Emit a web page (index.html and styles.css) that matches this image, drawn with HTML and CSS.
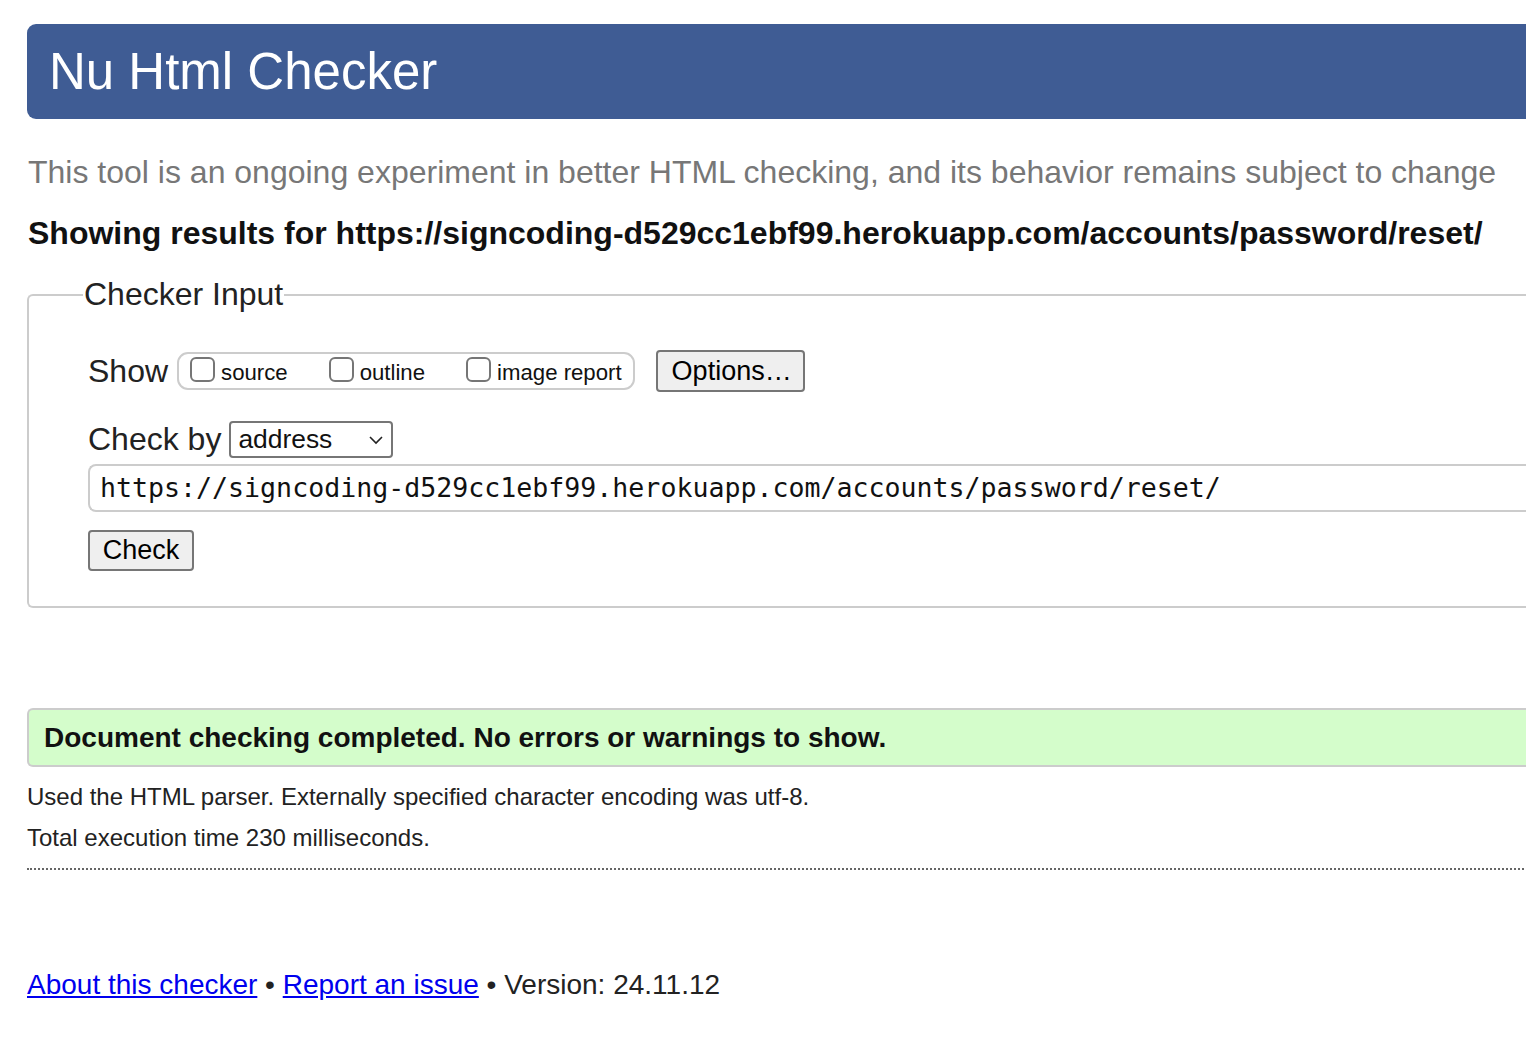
FILE: index.html
```html
<!DOCTYPE html>
<html lang="en">
<head>
<meta charset="utf-8">
<title>Nu Html Checker</title>
<link rel="stylesheet" href="styles.css">
</head>
<body>
<div class="page">
  <h1 class="banner">Nu Html Checker</h1>
  <p class="tagline">This tool is an ongoing experiment in better HTML checking, and its behavior remains subject to change</p>
  <p class="showing">Showing results for https://signcoding-d529cc1ebf99.herokuapp.com/accounts/password/reset/</p>
  <fieldset class="input-box">
    <legend class="legend">Checker Input</legend>
    <div class="row show-row">
      <span class="label">Show</span>
      <span class="pill">
        <label class="opt"><span class="cb"></span>source</label>
        <label class="opt"><span class="cb"></span>outline</label>
        <label class="opt"><span class="cb"></span>image report</label>
      </span>
      <span class="btn options">Options…</span>
    </div>
    <div class="row checkby-row">
      <span class="label">Check by</span>
      <span class="select">address
        <svg class="chev" width="16" height="10" viewBox="0 0 16 10"><path d="M2 2 L8 8 L14 2" fill="none" stroke="#222" stroke-width="1.6"/></svg>
      </span>
    </div>
    <div class="url">https://signcoding-d529cc1ebf99.herokuapp.com/accounts/password/reset/</div>
    <div class="row"><span class="btn check">Check</span></div>
  </fieldset>
  <div class="success">Document checking completed. No errors or warnings to show.</div>
  <p class="details first">Used the HTML parser. Externally specified character encoding was utf-8.</p>
  <p class="details">Total execution time 230 milliseconds.</p>
  <hr class="dots">
  <p class="footer"><a href="#">About this checker</a> • <a href="#">Report an issue</a> • Version: 24.11.12</p>
</div>
</body>
</html>
```

FILE: styles.css
```css
html, body { margin: 0; padding: 0; overflow: hidden; background: #fff; }
body { font-family: "Liberation Sans", Arial, sans-serif; color: #222; }
.page { padding: 24px 0 0 27px; width: 1560px; }
.banner {
  margin: 0; height: 95px; box-sizing: border-box;
  background: #3f5c94; color: #fff; font-weight: normal;
  font-size: 51px; line-height: 95px; padding-left: 22px;
  border-radius: 9px 0 0 9px;
}
.tagline { margin: 33px 0 0 1px; font-size: 32px; color: #777; line-height: 40px; }
.showing { margin: 21px 0 0 1px; font-size: 32px; font-weight: bold; color: #111; line-height: 40px; }
.input-box {
  margin: 23px 0 0 0; padding: 0 0 35px 59px; border: 2px solid #ccc; border-right: none;
  border-radius: 6px 0 0 6px; min-width: 0; box-sizing: border-box;
}
.legend { font-size: 32px; padding: 0 1px; margin-left: -5px; color: #222; }
.row { display: flex; align-items: center; }
.label { font-size: 32px; color: #222; }
.show-row { margin-top: 37px; }
.pill {
  display: inline-flex; align-items: center; margin-left: 9px; height: 38px; box-sizing: border-box;
  border: 2px solid #ccc; border-radius: 11px; padding: 0 11px 0 11px; gap: 41px;
}
.opt { font-size: 22.2px; display: inline-flex; align-items: center; color: #111; padding-top: 4px; }
.cb { width: 25px; height: 25px; border: 2px solid #767676; border-radius: 6px; box-sizing: border-box; margin-right: 6px; margin-top: -8px; }
.btn {
  display: inline-block; background: #efefef; border: 2px solid #767676; border-radius: 4px;
  font-size: 27px; color: #000; box-sizing: border-box;
}
.options { margin-left: 21px; padding: 0 14px; height: 42px; line-height: 38px; width: 149px; text-align: center; }
.checkby-row { margin-top: 29px; }
.select {
  display: inline-flex; align-items: center; justify-content: space-between; margin-left: 8px;
  width: 164px; height: 37px; box-sizing: border-box; border: 2px solid #767676; border-radius: 4px;
  font-size: 26.4px; padding: 0 7px 0 7px; color: #111;
}
.url {
  margin-top: 6px; height: 48px; box-sizing: border-box; border: 2px solid #ccc; border-right: none;
  border-radius: 8px 0 0 8px; font-family: "DejaVu Sans Mono", monospace; font-size: 26.6px;
  line-height: 44px; padding-left: 10px; color: #111;
}
.check { margin-top: 18px; height: 41px; line-height: 37px; width: 106px; text-align: center; }
.success {
  margin-top: 100px; height: 59px; box-sizing: border-box; background: #d4fdcb; border: 2px solid #ccc;
  border-right: none; border-radius: 6px 0 0 6px; font-size: 28px; font-weight: bold; color: #111;
  line-height: 55px; padding-left: 15px;
}
.details { margin: 0; font-size: 24px; line-height: 41px; color: #222; }
.details.first { margin-top: 9px; }
.dots { margin: 10px 0 0 0; border: none; border-top: 2px dotted #666; height: 0; }
.footer { margin: 99px 0 0 0; font-size: 28px; color: #222; }
.footer a { color: #00e; }
```
